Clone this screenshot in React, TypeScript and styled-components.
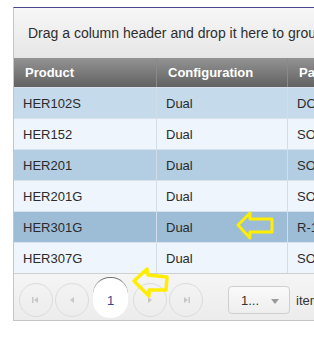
import React from "react";
import styled, { createGlobalStyle } from "styled-components";

const GlobalStyle = createGlobalStyle`
  html, body {
    margin: 0;
    padding: 0;
    background: #ffffff;
    font-family: "Liberation Sans", Arial, sans-serif;
    overflow: hidden;
  }
`;

const Page = styled.div`
  position: relative;
  width: 314px;
  height: 337px;
  overflow: hidden;
  padding-top: 7px;
  box-sizing: border-box;
`;

const Grid = styled.div`
  margin-left: 13px;
  width: 420px;
  border-left: 1px solid #c5c5c5;
  border-top: 1px solid #47478a;
  border-bottom: 1px solid #c5c5c5;
  background: #ffffff;
`;

const GroupPanel = styled.div`
  height: 50px;
  display: flex;
  align-items: center;
  padding-left: 14px;
  background: linear-gradient(#f7f7f7, #e6e6e6);
  color: #2e2e2e;
  font-size: 14px;
  white-space: nowrap;
`;

const Row = styled.div<{ $bg?: string }>`
  display: grid;
  grid-template-columns: 142px 131px 1fr;
  height: 31px;
  background: ${(p) => p.$bg || "#eef5fc"};
  border-top: 1px solid #d8e2ec;
  box-sizing: border-box;
`;

const HeaderRow = styled(Row)`
  height: 29px;
  border-top: none;
  background: linear-gradient(#939393, #626262);
`;

const HeadCell = styled.div`
  display: flex;
  align-items: center;
  padding-left: 11px;
  color: #ffffff;
  font-weight: bold;
  font-size: 13px;
  border-left: 1px solid #8a8a8a;
  &:first-child {
    border-left: none;
  }
`;

const Cell = styled.div`
  display: flex;
  align-items: center;
  padding-left: 9px;
  color: #2b2b2b;
  font-size: 13px;
  border-left: 1px solid #d2dde7;
  &:first-child {
    border-left: none;
  }
`;

const Pager = styled.div`
  height: 47px;
  display: flex;
  align-items: center;
  gap: 2px;
  padding-left: 5px;
  background: linear-gradient(#f5f5f5, #ececec);
  border-top: 1px solid #d0d0d0;
  box-sizing: border-box;
`;

const NavButton = styled.div`
  width: 32px;
  height: 32px;
  border-radius: 50%;
  border: 1px solid #dcdcdc;
  display: flex;
  align-items: center;
  justify-content: center;
  color: #c6c6c6;
  margin-top: 6px;
`;

const PageButton = styled.div`
  width: 35px;
  height: 41px;
  margin: 0 3px 0 2px;
  border-radius: 17px;
  background: #ffffff;
  border-top: 1px solid #707070;
  display: flex;
  align-items: center;
  justify-content: center;
  color: #35478a;
  font-size: 13px;
  box-sizing: border-box;
  padding-top: 6px;
`;

const SizeSelect = styled.div`
  margin-left: 23px;
  margin-top: 6px;
  width: 62px;
  height: 28px;
  border: 1px solid #cfcfcf;
  border-radius: 4px;
  background: linear-gradient(#fafafa, #eeeeee);
  display: flex;
  align-items: center;
  justify-content: space-between;
  padding: 0 10px 0 12px;
  box-sizing: border-box;
  color: #333333;
  font-size: 13px;
`;

const Caret = styled.span`
  width: 0;
  height: 0;
  border-left: 4px solid transparent;
  border-right: 4px solid transparent;
  border-top: 5px solid #9a9a9a;
  margin-top: 3px;
`;

const PagerLabel = styled.span`
  margin-left: 4px;
  margin-top: 6px;
  color: #333333;
  font-size: 13px;
`;

const Overlay = styled.svg`
  position: absolute;
  left: 0;
  top: 0;
  pointer-events: none;
`;

const rows = [
  { product: "HER102S", conf: "Dual", pkg: "DO-41", bg: "#c5daeb" },
  { product: "HER152", conf: "Dual", pkg: "SOD-123", bg: "#eef5fc" },
  { product: "HER201", conf: "Dual", pkg: "SOT-23", bg: "#b3cee3" },
  { product: "HER201G", conf: "Dual", pkg: "SOT-23", bg: "#eef5fc" },
  { product: "HER301G", conf: "Dual", pkg: "R-1", bg: "#9dbdd7" },
  { product: "HER307G", conf: "Dual", pkg: "SOT-23", bg: "#eef5fc" },
];

const Tri: React.FC<{ dir: "l" | "r"; bar?: boolean }> = ({ dir, bar }) => (
  <svg width="10" height="10" viewBox="0 0 10 10">
    {dir === "l" ? (
      <>
        {bar && <rect x="1" y="2" width="1.5" height="6" fill="#c6c6c6" />}
        <polygon points="7,2 3,5 7,8" fill="#c6c6c6" />
      </>
    ) : (
      <>
        <polygon points="3,2 7,5 3,8" fill="#c6c6c6" />
        {bar && <rect x="7.5" y="2" width="1.5" height="6" fill="#c6c6c6" />}
      </>
    )}
  </svg>
);

const App: React.FC = (): JSX.Element => {
  return (
    <Page>
      <GlobalStyle />
      <Grid>
        <GroupPanel>Drag a column header and drop it here to group by that column</GroupPanel>
        <HeaderRow>
          <HeadCell>Product</HeadCell>
          <HeadCell>Configuration</HeadCell>
          <HeadCell>Package</HeadCell>
        </HeaderRow>
        {rows.map((r) => (
          <Row key={r.product} $bg={r.bg}>
            <Cell>{r.product}</Cell>
            <Cell>{r.conf}</Cell>
            <Cell>{r.pkg}</Cell>
          </Row>
        ))}
        <Pager>
          <NavButton>
            <Tri dir="l" bar />
          </NavButton>
          <NavButton>
            <Tri dir="l" />
          </NavButton>
          <PageButton>1</PageButton>
          <NavButton>
            <Tri dir="r" />
          </NavButton>
          <NavButton>
            <Tri dir="r" bar />
          </NavButton>
          <SizeSelect>
            1...
            <Caret />
          </SizeSelect>
          <PagerLabel>items per page</PagerLabel>
        </Pager>
      </Grid>
      <Overlay width="314" height="337" viewBox="0 0 314 337">
        <polygon
          points="238,225 250,213 250,219 272,219 272,232 250,232 250,238"
          fill="none"
          stroke="#ffee00"
          strokeWidth="3"
          strokeLinejoin="round"
        />
        <polygon
          points="134,281 147,269 148,275 167,277 166,290 149,290 149,296"
          fill="none"
          stroke="#ffee00"
          strokeWidth="3.5"
          strokeLinejoin="round"
        />
      </Overlay>
    </Page>
  );
};

export default App;
